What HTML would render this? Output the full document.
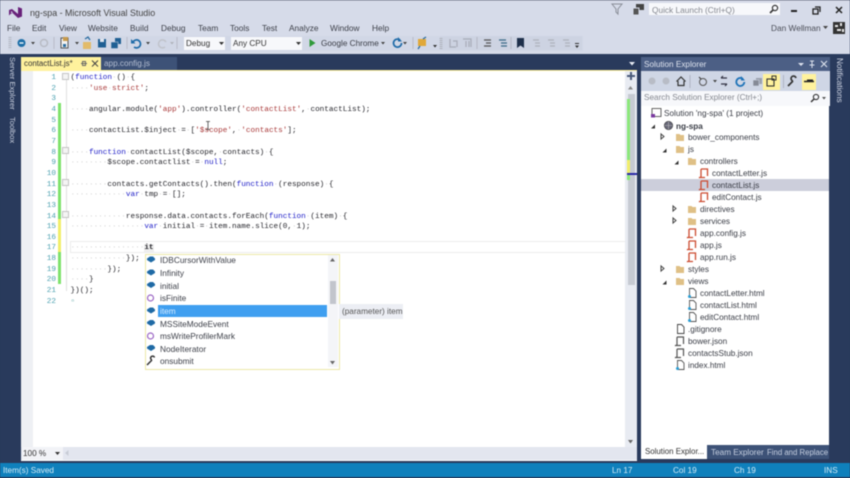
<!DOCTYPE html>
<html><head><meta charset="utf-8"><style>
html,body{margin:0;padding:0;background:#293a5c}
#r{position:relative;width:850px;height:478px;overflow:hidden;background:#293a5c;font-family:"Liberation Sans",sans-serif;font-size:8.2px;color:#3a3d46;filter:blur(.45px)}
.a{position:absolute}
.t{position:absolute;white-space:pre;line-height:12px;transform:translateY(-6px)}
#code{position:absolute;left:70.5px;top:72.5px;font:7.7px/10.67px "Liberation Mono",monospace;color:#26262c}
#code div{position:absolute;left:0;white-space:pre;height:11px}
#nums{position:absolute;left:36px;width:20px;top:72.5px;text-align:right;font:7.7px/10.67px "Liberation Mono",monospace;color:#4aa0b0}
#nums div{position:absolute;right:0;height:11px}
i{font-style:normal;color:#d0d0d0}
b{font-weight:normal;color:#2020c8}
u{text-decoration:none;color:#a83838}
.l{font-size:8.3px;color:#3c3f48}
.k{position:absolute;left:62px;width:5px;height:5px;border:1px solid #c4c4c4;background:#f4f4f4}
svg{position:absolute;overflow:visible}
</style></head><body><div id="r">

<!-- chrome -->
<div class="a" style="left:0;top:0;width:850px;height:54px;background:#d6dbe9"></div>
<div class="a" style="left:0;top:0;width:850px;height:1px;background:#c4c6ce"></div>
<div class="a" style="left:8px;top:36px;width:575px;height:15px;background:#d1d7e6"></div>
<svg style="left:8px;top:6px" width="15" height="13" viewBox="0 0 15 13"><path d="M1 4 L4 3 L10 8 L10 1 L14 2.500 L14 10.500 L10 12 L4 6.500 L1 9.500 Z M3 5 L3 8 L5 6.500 Z" fill="#68217a" fill-rule="evenodd"/></svg>
<div class="t" style="left:30px;top:12.500px;font-size:8.900px;color:#444">ng-spa - Microsoft Visual Studio</div>
<div class="t l" style="left:7px;top:27.500px">File</div>
<div class="t l" style="left:32px;top:27.500px">Edit</div>
<div class="t l" style="left:59px;top:27.500px">View</div>
<div class="t l" style="left:88px;top:27.500px">Website</div>
<div class="t l" style="left:130px;top:27.500px">Build</div>
<div class="t l" style="left:161px;top:27.500px">Debug</div>
<div class="t l" style="left:198px;top:27.500px">Team</div>
<div class="t l" style="left:230px;top:27.500px">Tools</div>
<div class="t l" style="left:262px;top:27.500px">Test</div>
<div class="t l" style="left:289px;top:27.500px">Analyze</div>
<div class="t l" style="left:330px;top:27.500px">Window</div>
<div class="t l" style="left:372px;top:27.500px">Help</div>

<!-- top right -->
<svg style="left:611px;top:3px" width="12" height="12"><path d="M1 1H11L7 6V11L5 9V6Z" fill="none" stroke="#8a8e98"/></svg>
<svg style="left:632px;top:3px" width="13" height="13"><rect x="4" y="1" width="8" height="6" fill="#444"/><rect x="1" y="5" width="6" height="7" fill="#555" stroke="#d6dbe9"/></svg>
<div class="a" style="left:649px;top:3px;width:131px;height:12px;background:#f7f8fb"></div>
<div class="t" style="left:652px;top:9.500px;font-size:8.300px;color:#84878f">Quick Launch (Ctrl+Q)</div>
<svg style="left:769px;top:4px" width="10" height="10"><circle cx="6" cy="4" r="2.600" fill="none" stroke="#333" stroke-width="1.200"/><path d="M4 6L1 9" stroke="#333" stroke-width="1.600"/></svg>
<div class="a" style="left:791px;top:10px;width:6px;height:2px;background:#222"></div>
<svg style="left:812px;top:6px" width="9" height="9"><rect x="1" y="3" width="5" height="5" fill="none" stroke="#222" stroke-width="1.300"/><path d="M3 1H8V6" fill="none" stroke="#222" stroke-width="1.300"/></svg>
<svg style="left:835px;top:6px" width="9" height="9"><path d="M1 1L7 7M7 1L1 7" stroke="#222" stroke-width="1.500"/></svg>
<div class="t" style="left:771px;top:28px;font-size:8.300px;color:#4a4d57">Dan Wellman</div>
<svg style="left:823px;top:26px" width="6" height="4"><path d="M0 0H5L2.500 3Z" fill="#444"/></svg>
<svg style="left:833px;top:22px" width="12" height="12"><rect width="12" height="12" fill="#333"/><path d="M2 3h3v2h-3zM7 1h2v3h-2zM4 7h4v2h-4zM9 7h2v3h-2z" fill="#e8e8e8"/></svg>

<!-- toolbar -->
<svg style="left:0;top:36px" width="600" height="15">
<path d="M10 1v12" stroke="#b4b8c2" stroke-width="3" stroke-dasharray="1 1"/>
<circle cx="21.500" cy="7" r="4" fill="#1e6fa8"/><path d="M19.500 7h4" stroke="#fff" stroke-width="1.300"/>
<path d="M31 6h4l-2 2.500z" fill="#444"/>
<circle cx="44" cy="7" r="3.500" fill="none" stroke="#b8bbc4" stroke-width="1.500"/>
<path d="M54 1v12M127 1v12M177 1v12" stroke="#b8bcc8"/>
<rect x="61" y="2" width="7" height="10" fill="#f2f2f2" stroke="#555"/><rect x="63" y="1" width="5" height="4" fill="#c79a4c"/><rect x="63" y="8" width="3" height="3" fill="#2a6ca0"/>
<path d="M75 6h4l-2 2.500z" fill="#444"/>
<path d="M83 6h8v7h-8z" fill="#e2bb6a"/><path d="M85 3l3-2 2 3" fill="none" stroke="#2a6ca0" stroke-width="1.300"/>
<rect x="98" y="3" width="8" height="8.500" fill="#1f5f93"/><rect x="100" y="3" width="4" height="3" fill="#dfe6f0"/>
<rect x="115" y="2" width="6" height="6" fill="#1f5f93"/><rect x="111" y="6" width="7" height="6.500" fill="#1f5f93" stroke="#d0d6e4" stroke-width=".5"/>
<path d="M133 6 a4 4 0 1 1 1 5" fill="none" stroke="#1f6ba8" stroke-width="1.700"/><path d="M131 3v4.500h4.500z" fill="#1f6ba8"/>
<path d="M146 6h4l-2 2.500z" fill="#444"/>
<path d="M166 6 a4 4 0 1 0 -1 5" fill="none" stroke="#c0c3cb" stroke-width="1.500"/>
<path d="M170 6h4l-2 2.500z" fill="#b0b3bc"/>
<path d="M309.500 3v8l6-4z" fill="#2f9a3a"/>
<path d="M381 6h4l-2 2.500z" fill="#444"/>
<path d="M400 4a4 4 0 1 0 1.500 3" fill="none" stroke="#1f6ba8" stroke-width="1.700"/><path d="M398 1v4.500h4z" fill="#1f6ba8"/>
<path d="M403 6h4l-2 2.500z" fill="#444"/>
<path d="M413 1v12" stroke="#b8bcc8"/>
<rect x="418" y="3" width="8" height="7" fill="#e0a83a"/><path d="M420 10l-2 3M423 3l3-2" stroke="#2a6ca0" stroke-width="1.300"/>
<path d="M433 9h4l-2 2.500z" fill="#333"/>
<rect x="440" y="0" width="142" height="14" fill="#cdd3e2"/>
<path d="M441 2v11" stroke="#aeb2bc" stroke-width="3" stroke-dasharray="1 1"/>
<path d="M450 3v8h6M453 5h4v6" fill="none" stroke="#a8acb8" stroke-width="1.200"/>
<path d="M463 3h8v8M466 5v6M469 5v6" fill="none" stroke="#a8acb8" stroke-width="1.200"/>
<path d="M477 1v12" stroke="#b4b8c4"/>
<path d="M484 4h7M486 7h5M484 10h7" stroke="#555" stroke-width="1.200"/>
<path d="M499 4h7M501 7h6M501 10h6" stroke="#3a6a88" stroke-width="1.300"/>
<path d="M511 1v12" stroke="#b4b8c4"/>
<path d="M517 2h7v10l-3.500-2.500L517 12z" fill="#1e2f4a"/>
<path d="M533 4h6M535 7h5M535 10h5" stroke="#aeb2bc" stroke-width="1.300"/>
<path d="M548 4h6M550 7h5M550 10h5" stroke="#aeb2bc" stroke-width="1.300"/>
<path d="M563 4h6M565 7h5M565 10h5" stroke="#aeb2bc" stroke-width="1.300"/>
<path d="M575 9.500h4l-2 2.500z" fill="#333"/><path d="M575 7.500h4" stroke="#333"/>
</svg>
<div class="a" style="left:184px;top:37px;width:41px;height:13px;background:#f7f8fb"></div>
<div class="t" style="left:186px;top:43.500px;color:#333">Debug</div>
<svg style="left:219px;top:42px" width="6" height="4"><path d="M0 0H5L2.500 3Z" fill="#333"/></svg>
<div class="a" style="left:231px;top:37px;width:71px;height:13px;background:#f7f8fb"></div>
<div class="t" style="left:233px;top:43.500px;color:#333">Any CPU</div>
<svg style="left:296px;top:42px" width="6" height="4"><path d="M0 0H5L2.500 3Z" fill="#333"/></svg>
<div class="t" style="left:321px;top:43.500px;color:#3a3d46">Google Chrome</div>

<!-- side rails -->
<div class="a" style="left:0;top:54px;width:850px;height:3px;background:#293a5c"></div>
<div class="a" style="left:8px;top:57px;writing-mode:vertical-rl;font-size:7.600px;color:#d0d6e4;line-height:9px">Server Explorer</div>
<div class="a" style="left:8px;top:117px;writing-mode:vertical-rl;font-size:7.600px;color:#d0d6e4;line-height:9px">Toolbox</div>
<div class="a" style="left:835px;top:58px;writing-mode:vertical-rl;font-size:8.200px;color:#d0d6e4;line-height:9px">Notifications</div>

<!-- tabs -->
<div class="a" style="left:21px;top:57px;width:80px;height:13px;background:#fff29d"></div>
<div class="t" style="left:24px;top:64px;font-size:7.900px;color:#333">contactList.js*</div>
<svg style="left:81px;top:60px" width="18" height="8"><path d="M0 3.500h6M1.500 1.500h3v4h-3z" stroke="#666" fill="none" stroke-width=".9"/><path d="M11 .5l6 6M17 .5l-6 6" stroke="#444" stroke-width="1"/></svg>
<div class="a" style="left:101px;top:57px;width:76px;height:13px;background:#3d5277"></div>
<div class="t" style="left:104px;top:64px;color:#b4bed2">app.config.js</div>
<svg style="left:629px;top:62px" width="7" height="4"><path d="M0 0H6L3 3.500Z" fill="#e8ecf4"/></svg>
<div class="a" style="left:21px;top:69.500px;width:616px;height:1.500px;background:#fff29d"></div>

<!-- editor -->
<div class="a" style="left:21px;top:71px;width:616px;height:390px;background:#fff"></div>
<div class="a" style="left:21px;top:71px;width:12px;height:376px;background:#eef0f4"></div>
<div class="a" style="left:58px;top:103px;width:3px;height:116px;background:#7ee26c"></div>
<div class="a" style="left:58px;top:219px;width:3px;height:33px;background:#f2ee6a"></div>
<div class="a" style="left:58px;top:252px;width:3px;height:32px;background:#7ee26c"></div>
<div class="a" style="left:65.500px;top:76px;width:1px;height:215px;background:#e0e0e0"></div>
<div class="k" style="top:72.500px"></div>
<div class="k" style="top:147px"></div>
<div class="k" style="top:179px"></div>
<div class="k" style="top:211px"></div>
<div class="a" style="left:70px;top:240.500px;width:554px;height:10px;border:1px solid #ececec"></div>

<div id="nums">
<div style="top:0px">1</div><div style="top:11px">2</div><div style="top:21px">3</div><div style="top:32px">4</div><div style="top:43px">5</div><div style="top:53px">6</div><div style="top:64px">7</div><div style="top:75px">8</div><div style="top:85px">9</div><div style="top:96px">10</div><div style="top:107px">11</div><div style="top:117px">12</div><div style="top:128px">13</div><div style="top:139px">14</div><div style="top:149px">15</div><div style="top:160px">16</div><div style="top:170px">17</div><div style="top:181px">18</div><div style="top:192px">19</div><div style="top:202px">20</div><div style="top:213px">21</div><div style="top:224px">22</div>
</div>

<div id="code">
<div style="top:0px">(<b>function</b><i>·</i>()<i>·</i>{</div>
<div style="top:11px"><i>····</i><u>'use<i>·</i>strict'</u>;</div>
<div style="top:32px"><i>····</i>angular.module(<u>'app'</u>).controller(<u>'contactList'</u>,<i>·</i>contactList);</div>
<div style="top:53px"><i>····</i>contactList.$inject<i>·</i>=<i>·</i>[<u>'$scope'</u>,<i>·</i><u>'contacts'</u>];</div>
<div style="top:75px"><i>····</i><b>function</b><i>·</i>contactList($scope,<i>·</i>contacts)<i>·</i>{</div>
<div style="top:85px"><i>········</i>$scope.contactlist<i>·</i>=<i>·</i><b>null</b>;</div>
<div style="top:107px"><i>········</i>contacts.getContacts().then(<b>function</b><i>·</i>(response)<i>·</i>{</div>
<div style="top:117px"><i>············</i><b>var</b><i>·</i>tmp<i>·</i>=<i>·</i>[];</div>
<div style="top:139px"><i>············</i>response.data.contacts.forEach(<b>function</b><i>·</i>(item)<i>·</i>{</div>
<div style="top:149px"><i>················</i><b>var</b><i>·</i>initial<i>·</i>=<i>·</i>item.name.slice(0,<i>·</i>1);</div>
<div style="top:170px"><i>················</i><span style="background:#eee;font-weight:bold">it</span></div>
<div style="top:181px"><i>············</i>});</div>
<div style="top:192px"><i>········</i>});</div>
<div style="top:202px"><i>····</i>}</div>
<div style="top:213px">})();</div>
<div style="top:224px"><span style="color:#6aa">▫</span></div>
</div>

<!-- I-beam -->
<svg style="left:206px;top:121px" width="5" height="10"><path d="M0 .5h4M2 .5v8M0 8.500h4" stroke="#444" fill="none" stroke-width=".8"/></svg>

<!-- completion -->
<div class="a" style="left:144.500px;top:253.500px;width:193px;height:114px;background:#fff;border:1px solid #ece8a8"></div>
<div class="a" style="left:158px;top:304.500px;width:169px;height:12px;background:#3f9ff0"></div>
<div class="a" style="left:328px;top:255px;width:10px;height:112px;background:#f4f5f8"></div>
<div class="a" style="left:330px;top:281px;width:5.500px;height:23px;background:#c2c5cc"></div>
<svg style="left:330px;top:258px" width="6" height="4"><path d="M0 3.500H5L2.500 0Z" fill="#666"/></svg>
<svg style="left:330px;top:361px" width="6" height="4"><path d="M0 0H5L2.500 3.500Z" fill="#666"/></svg>
<div class="a" style="left:339px;top:304px;width:64px;height:15px;background:#eceef4"></div>
<div class="t" style="left:342px;top:312px;color:#555">(parameter) item</div>
<div class="t l" style="left:160px;top:260px">IDBCursorWithValue</div>
<div class="t l" style="left:160px;top:273px">Infinity</div>
<div class="t l" style="left:160px;top:285.500px">initial</div>
<div class="t l" style="left:160px;top:298px">isFinite</div>
<div class="t l" style="left:160px;top:311px;color:#d8ecff">item</div>
<div class="t l" style="left:160px;top:323.500px">MSSiteModeEvent</div>
<div class="t l" style="left:160px;top:336px">msWriteProfilerMark</div>
<div class="t l" style="left:160px;top:348.500px">NodeIterator</div>
<div class="t l" style="left:160px;top:361px">onsubmit</div>
<svg style="left:146px;top:255px" width="10" height="112">
<g fill="#1f6aa5"><path d="M1 3.500 L4 1.500 L7 1.500 L9 3.500 V5 L5 7.500 L1 5Z"/><path transform="translate(0,13)" d="M1 3.500 L4 1.500 L7 1.500 L9 3.500 V5 L5 7.500 L1 5Z"/><path transform="translate(0,25.500)" d="M1 3.500 L4 1.500 L7 1.500 L9 3.500 V5 L5 7.500 L1 5Z"/><path transform="translate(0,51)" d="M1 3.500 L4 1.500 L7 1.500 L9 3.500 V5 L5 7.500 L1 5Z"/><path transform="translate(0,63.500)" d="M1 3.500 L4 1.500 L7 1.500 L9 3.500 V5 L5 7.500 L1 5Z"/><path transform="translate(0,88.500)" d="M1 3.500 L4 1.500 L7 1.500 L9 3.500 V5 L5 7.500 L1 5Z"/></g>
<circle cx="4.500" cy="43" r="3" fill="none" stroke="#9b65c4" stroke-width="1.200"/><circle cx="4.500" cy="81" r="3" fill="none" stroke="#9b65c4" stroke-width="1.200"/>
<path d="M1 110L6 105M6 105a2 2 0 1 1 2.500-2.500" stroke="#333" stroke-width="1.500" fill="none"/>
</svg>

<!-- scrollbar -->
<div class="a" style="left:625px;top:71px;width:12px;height:376px;background:#e8ebf2"></div>
<svg style="left:627px;top:72px" width="9" height="9"><path d="M4 0v8M0 4h8" stroke="#4a5a78" stroke-width="2"/></svg>
<svg style="left:628px;top:86px" width="6" height="4"><path d="M0 3.500H5L2.500 0Z" fill="#888"/></svg>
<div class="a" style="left:628px;top:94px;width:7px;height:191px;background:#c6cad2"></div>
<div class="a" style="left:626.500px;top:99px;width:3px;height:81px;background:#8be87a"></div>
<div class="a" style="left:626.500px;top:160px;width:3px;height:14px;background:#f2ee6a"></div>
<div class="a" style="left:626.500px;top:173px;width:10.500px;height:1.500px;background:#2a2aa8"></div>
<svg style="left:628px;top:440px" width="6" height="4"><path d="M0 0H5L2.500 3.500Z" fill="#666"/></svg>

<!-- hscroll row -->
<div class="a" style="left:21px;top:447px;width:616px;height:12.500px;background:#e3e6ef"></div>
<div class="a" style="left:22px;top:447px;width:41px;height:12.500px;background:#f2f3f7"></div>
<div class="t" style="left:23px;top:453.500px;color:#333">100 %</div>
<svg style="left:55px;top:452px" width="6" height="4"><path d="M0 0H5L2.500 3Z" fill="#333"/></svg>
<svg style="left:65px;top:450px" width="4" height="7"><path d="M3.500 0V6L0 3Z" fill="#c8ccd6"/></svg>

<!-- status -->
<div class="a" style="left:0;top:463px;width:850px;height:13.500px;background:#0f80bc"></div>
<div class="t" style="left:3px;top:471px;color:#d4ecf8">Item(s) Saved</div>
<div class="t" style="left:612px;top:471px;color:#d4ecf8">Ln 17</div>
<div class="t" style="left:673px;top:471px;color:#d4ecf8">Col 19</div>
<div class="t" style="left:734px;top:471px;color:#d4ecf8">Ch 19</div>
<div class="t" style="left:824px;top:471px;color:#d4ecf8">INS</div>

<!-- solution explorer -->
<div class="a" style="left:641px;top:57px;width:189px;height:14px;background:#4c5f85"></div>
<div class="t" style="left:644px;top:65px;color:#dde3ee">Solution Explorer</div>
<svg style="left:798px;top:60px" width="30" height="9"><path d="M0 3H6L3 6Z" fill="#dde3ee"/><path d="M12 1h4M14 1v4M11.500 5h5M14 5v3" stroke="#dde3ee" fill="none"/><path d="M23 1l6 6M29 1l-6 6" stroke="#dde3ee" stroke-width="1.100"/></svg>
<div class="a" style="left:641px;top:71px;width:189px;height:20px;background:#cfd6e5"></div>
<svg style="left:641px;top:71px" width="189" height="20">
<circle cx="11" cy="10" r="3.500" fill="#b8bcc6"/><circle cx="25" cy="10" r="3.500" fill="#b8bcc6"/>
<path d="M35.500 10.500l4.500-4.500 4.500 4.500M37 10v4.500h6V10" fill="none" stroke="#333" stroke-width="1.200"/>
<path d="M49 4v13" stroke="#aeb4c2"/>
<circle cx="62" cy="11" r="3.500" fill="none" stroke="#555"/><path d="M58 6l2 2" stroke="#333"/>
<path d="M72 9h4l-2 2.500z" fill="#444"/>
<path d="M80 7h6M80 7l2-2M86 13h-6M86 13l-2 2" stroke="#334" stroke-width="1.200" fill="none"/>
<path d="M102 8a4 4 0 1 0 1.300 3" fill="none" stroke="#1f73b8" stroke-width="1.800"/><path d="M100 5v4.500h4z" fill="#1f73b8"/>
<rect x="115" y="7" width="6" height="6" fill="#9aa0ac"/><rect x="112" y="9" width="6" height="6" fill="#858a96" stroke="#cfd6e5" stroke-width=".6"/>
<rect x="122" y="3" width="17" height="16" fill="#fff29d"/>
<rect x="126" y="8" width="7" height="7" fill="none" stroke="#333" stroke-width="1.100"/><rect x="131" y="5" width="4" height="4" fill="none" stroke="#333"/>
<path d="M142.500 4v13" stroke="#aeb4c2"/>
<path d="M147 15l5-5M152 10a2.500 2.500 0 1 1 3-3" stroke="#333" stroke-width="1.700" fill="none"/>
<rect x="161" y="3" width="14" height="16" fill="#fff29d"/>
<path d="M163 10.500h10" stroke="#222" stroke-width="1.500"/><rect x="166" y="8.500" width="6" height="2" fill="#222"/>
</svg>
<div class="a" style="left:641px;top:91px;width:189px;height:14.500px;background:#f7f8fb"></div>
<div class="t" style="left:644px;top:98px;color:#84878f">Search Solution Explorer (Ctrl+;)</div>
<svg style="left:810px;top:93px" width="16" height="10"><circle cx="6" cy="4" r="2.600" fill="none" stroke="#333" stroke-width="1.100"/><path d="M4 6L1 9" stroke="#333" stroke-width="1.500"/><path d="M12 4h4l-2 2.500z" fill="#555"/></svg>
<div class="a" style="left:641px;top:106px;width:188px;height:339px;background:#fff"></div>
<div class="a" style="left:641px;top:179px;width:188px;height:12px;background:#cccedb"></div>

<!-- tree arrows -->
<svg style="left:641px;top:106px" width="60" height="240">
<path fill="#333" d="M10 22.500l4-4v4zM21.500 46.500l4-4v4zM33.500 58.500l4-4v4zM21.500 178.500l4-4v4z"/>
<path fill="none" stroke="#444" d="M20 28v5l3-2.500zM32 100v5l3-2.500zM32 112v5l3-2.500zM20 160v5l3-2.500z"/>
</svg>

<!-- tree icons -->
<svg style="left:641px;top:106px" width="188" height="270">
<defs>
<g id="fo"><path d="M0 2h3.500l1 1H8v6H0z" fill="#dfc086"/></g>
<g id="js"><path d="M2 1h6.500v7M2 1v7.500a1.500 1.500 0 0 1-2 1h6" fill="none" stroke="#cc4b30" stroke-width="1.300"/></g>
<g id="ht"><path d="M1.500 .5h4l2.500 2.500v6.500h-6.500z" fill="#fff" stroke="#555" stroke-width=".9"/><circle cx="1.500" cy="8.500" r="1.500" fill="#2a9fd6"/></g>
<g id="jn"><path d="M2 1h6.500v7M2 1v7.500a1.500 1.500 0 0 1-2 1h6" fill="none" stroke="#555" stroke-width="1.200"/></g>
</defs>
<rect x="11" y="2.500" width="9" height="8" fill="#fff" stroke="#555" stroke-width=".9"/><rect x="10" y="8" width="4" height="3.500" fill="#7a3aa0"/>
<circle cx="27.500" cy="19.500" r="4.200" fill="#667" stroke="#333" stroke-width=".6"/><path d="M23.500 19.500h8M27.500 15.500v8" stroke="#bbb" stroke-width=".6"/>
<use href="#fo" x="35" y="26"/>
<use href="#fo" x="35" y="38"/>
<use href="#fo" x="47" y="50"/>
<use href="#js" x="58" y="62"/>
<use href="#js" x="58" y="74"/>
<use href="#js" x="58" y="86"/>
<use href="#fo" x="47" y="98"/>
<use href="#fo" x="47" y="110"/>
<use href="#js" x="46" y="122"/>
<use href="#js" x="46" y="134"/>
<use href="#js" x="46" y="146"/>
<use href="#fo" x="35" y="158"/>
<use href="#fo" x="35" y="170"/>
<use href="#ht" x="47" y="182"/>
<use href="#ht" x="47" y="194"/>
<use href="#ht" x="47" y="206"/>
<path d="M36.500 218.500h4l2.500 2.500v6.500h-6.500z" fill="#fff" stroke="#444" stroke-width=".9"/>
<use href="#jn" x="34" y="230"/>
<use href="#jn" x="34" y="242"/>
<use href="#ht" x="35" y="254"/>
</svg>

<!-- tree text -->
<div class="t" style="left:664px;top:113.500px">Solution 'ng-spa' (1 project)</div>
<div class="t" style="left:676px;top:126.500px;font-weight:bold">ng-spa</div>
<div class="t" style="left:688px;top:138px">bower_components</div>
<div class="t" style="left:688px;top:150px">js</div>
<div class="t" style="left:700px;top:162px">controllers</div>
<div class="t" style="left:712px;top:174px">contactLetter.js</div>
<div class="t" style="left:712px;top:186px">contactList.js</div>
<div class="t" style="left:712px;top:198px">editContact.js</div>
<div class="t" style="left:700px;top:210px">directives</div>
<div class="t" style="left:700px;top:222px">services</div>
<div class="t" style="left:700px;top:234px">app.config.js</div>
<div class="t" style="left:700px;top:246px">app.js</div>
<div class="t" style="left:700px;top:258px">app.run.js</div>
<div class="t" style="left:688px;top:270px">styles</div>
<div class="t" style="left:688px;top:282px">views</div>
<div class="t" style="left:700px;top:294px">contactLetter.html</div>
<div class="t" style="left:700px;top:306px">contactList.html</div>
<div class="t" style="left:700px;top:318px">editContact.html</div>
<div class="t" style="left:688px;top:330px">.gitignore</div>
<div class="t" style="left:688px;top:342px">bower.json</div>
<div class="t" style="left:688px;top:354px">contactsStub.json</div>
<div class="t" style="left:688px;top:366px">index.html</div>

<!-- se tabs -->
<div class="a" style="left:641px;top:445px;width:66px;height:14px;background:#fff"></div>
<div class="a" style="left:707px;top:445px;width:122px;height:14px;background:#3d5277"></div>
<div class="t" style="left:645px;top:452px;font-size:7.900px;color:#333">Solution Explor...</div>
<div class="t" style="left:711px;top:452.500px;color:#c6cfe0">Team Explorer</div>
<div class="t" style="left:767px;top:452.500px;font-size:7.800px;color:#c6cfe0">Find and Replace</div>

</div></body></html>
